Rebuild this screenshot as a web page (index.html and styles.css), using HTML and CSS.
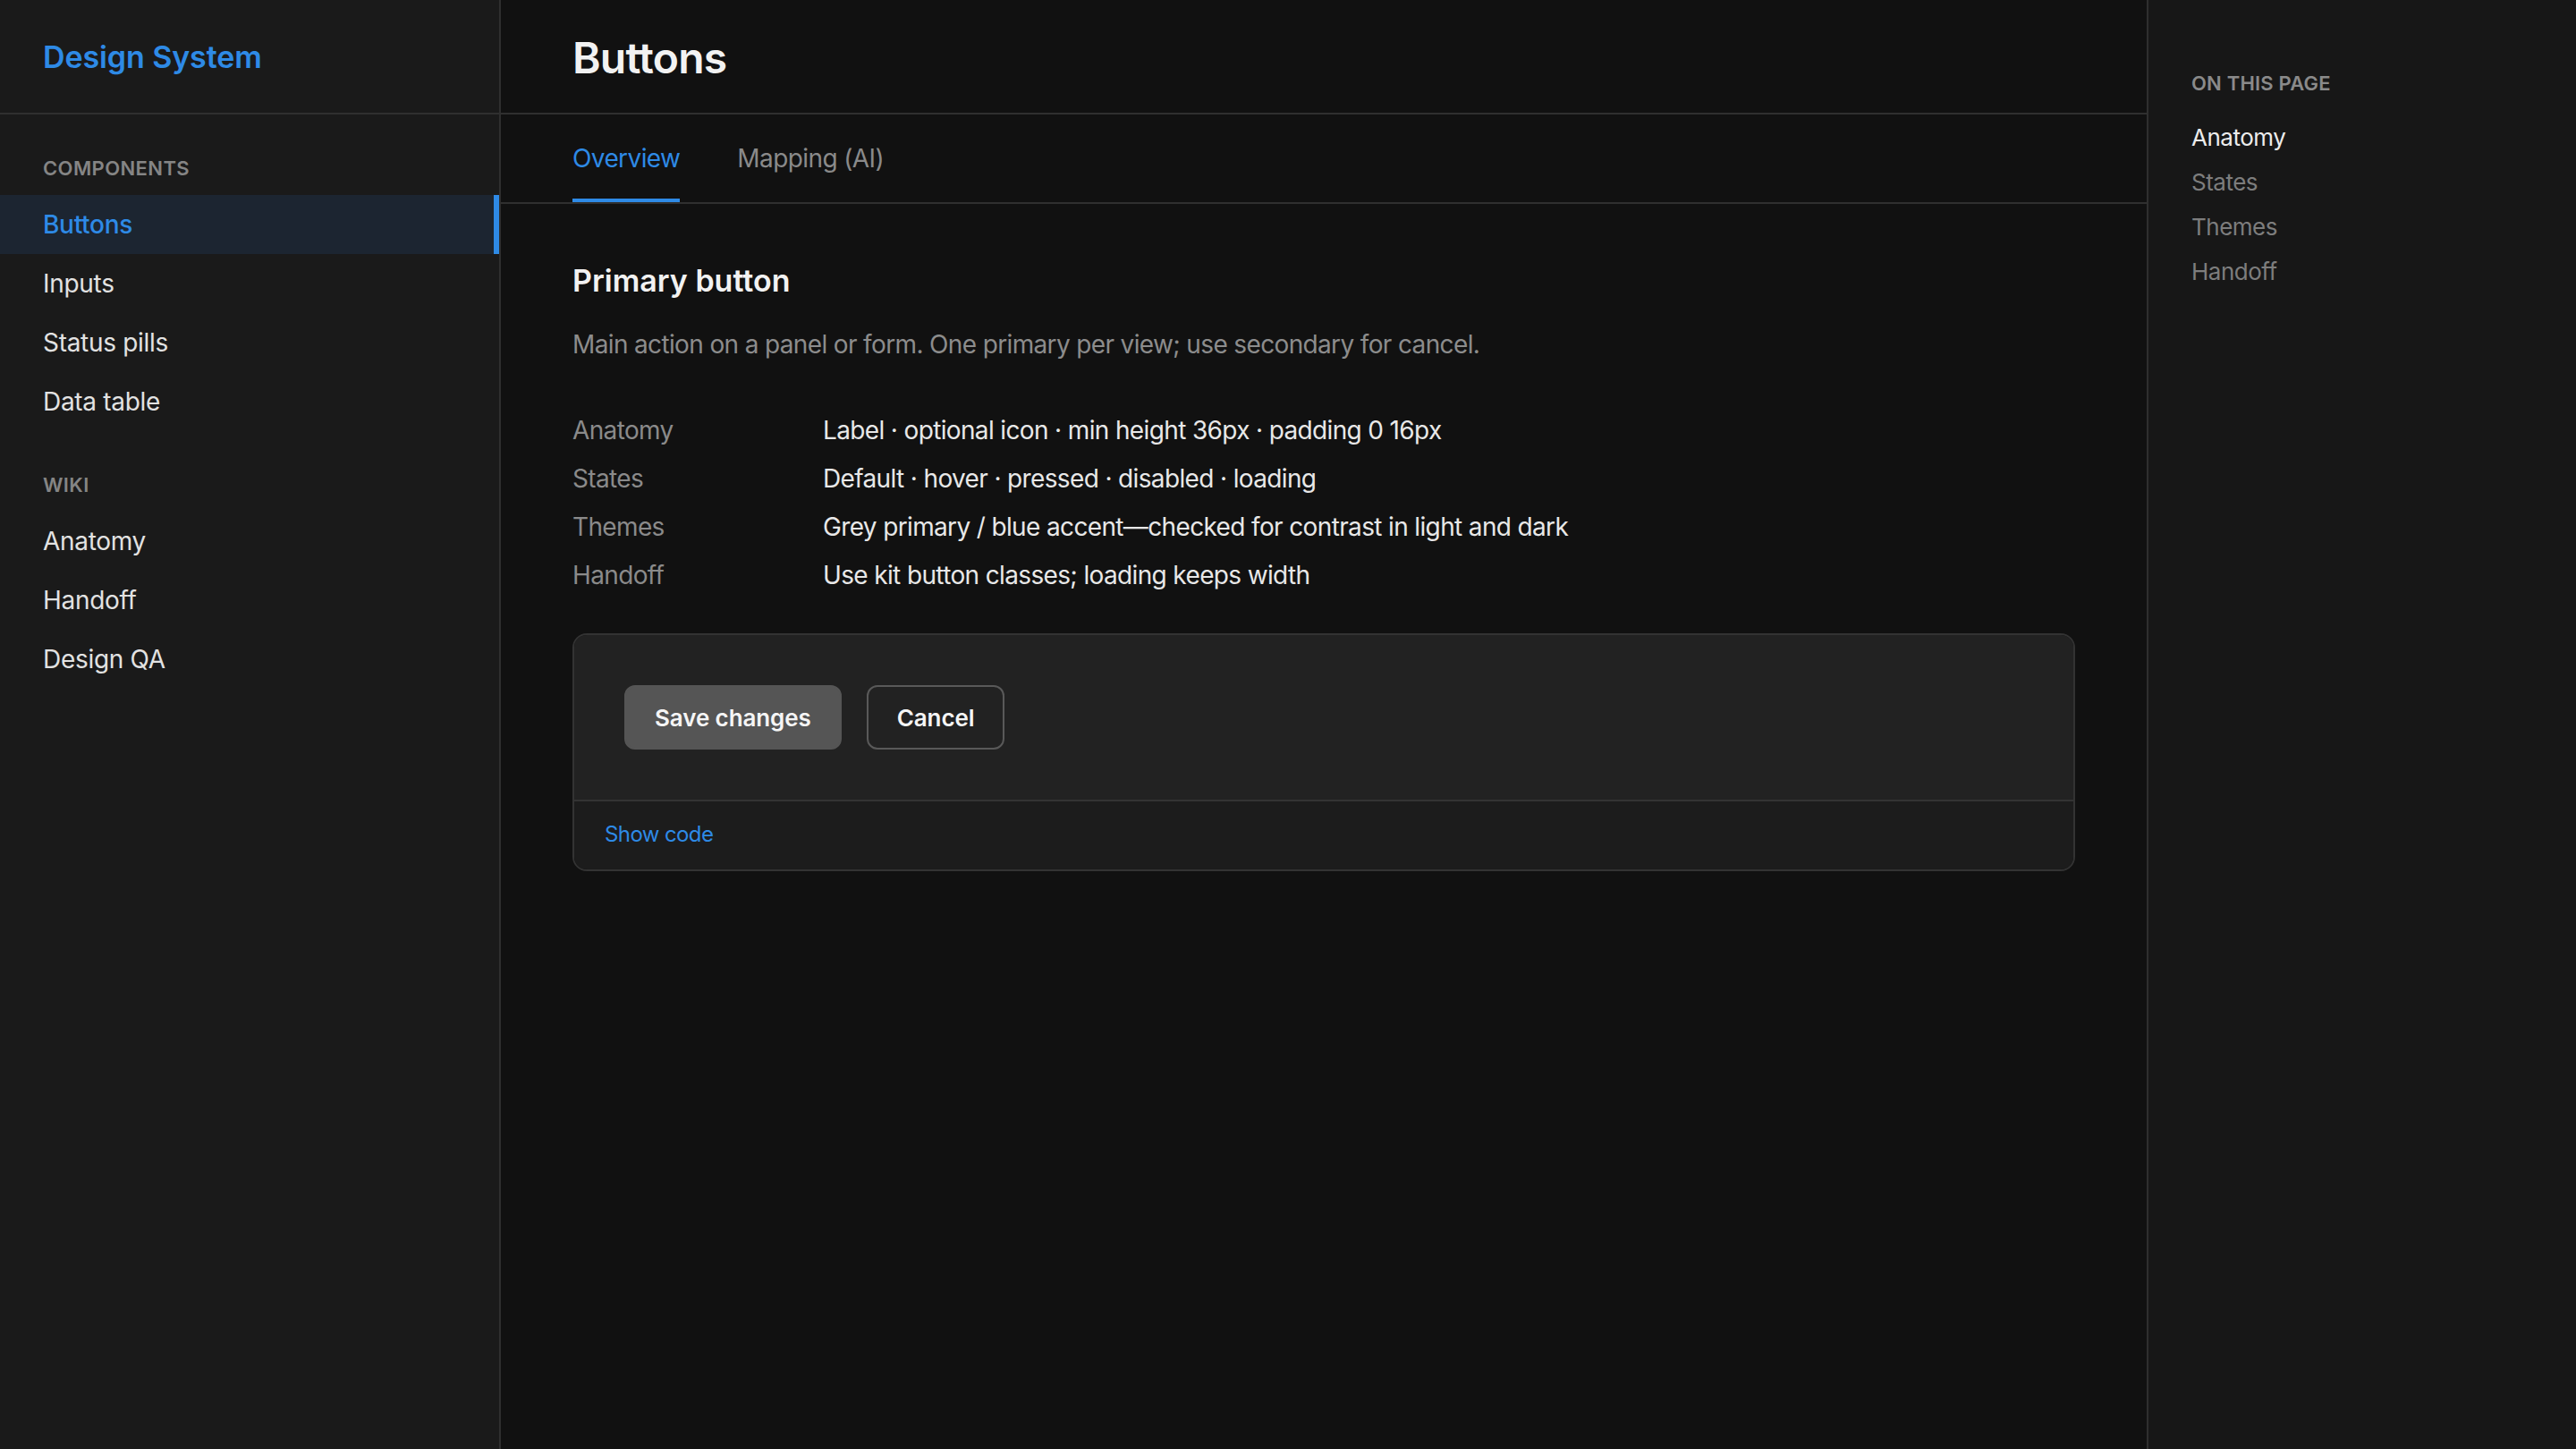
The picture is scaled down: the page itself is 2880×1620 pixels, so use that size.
FILE: index.html
```html
<!DOCTYPE html>
<html lang="en">
<head>
<meta charset="utf-8">
<title>Design System — Buttons</title>
<link rel="stylesheet" href="styles.css">
</head>
<body>
<div class="app">
  <aside class="sidebar">
    <div class="brand">Design System</div>
    <nav class="nav">
      <div class="nav-label">Components</div>
      <a class="nav-item active">Buttons</a>
      <a class="nav-item">Inputs</a>
      <a class="nav-item">Status pills</a>
      <a class="nav-item">Data table</a>
      <div class="nav-label nav-label-gap">Wiki</div>
      <a class="nav-item">Anatomy</a>
      <a class="nav-item">Handoff</a>
      <a class="nav-item">Design QA</a>
    </nav>
  </aside>

  <main class="main">
    <header class="page-header"><h1>Buttons</h1></header>
    <div class="tabs">
      <a class="tab active">Overview</a>
      <a class="tab">Mapping (AI)</a>
    </div>
    <section class="content">
      <h2>Primary button</h2>
      <p class="desc">Main action on a panel or form. One primary per view; use secondary for cancel.</p>
      <dl class="specs">
        <div class="spec-row"><dt>Anatomy</dt><dd>Label · optional icon · min height 36px · padding 0 16px</dd></div>
        <div class="spec-row"><dt>States</dt><dd>Default · hover · pressed · disabled · loading</dd></div>
        <div class="spec-row"><dt>Themes</dt><dd>Grey primary / blue accent—checked for contrast in light and dark</dd></div>
        <div class="spec-row"><dt>Handoff</dt><dd>Use kit button classes; loading keeps width</dd></div>
      </dl>
      <div class="demo">
        <div class="demo-preview">
          <button class="btn btn-primary">Save changes</button>
          <button class="btn btn-secondary">Cancel</button>
        </div>
        <div class="demo-footer"><a class="show-code">Show code</a></div>
      </div>
    </section>
  </main>

  <aside class="toc">
    <div class="toc-label">On this page</div>
    <a class="toc-item current">Anatomy</a>
    <a class="toc-item">States</a>
    <a class="toc-item">Themes</a>
    <a class="toc-item">Handoff</a>
  </aside>
</div>
</body>
</html>
```

FILE: styles.css
```css
html {
  zoom: 2;
}

* {
  box-sizing: border-box;
}

body {
  margin: 0;
  background: #111111;
  color: #e6e6e6;
  font-family: Inter, "Noto Sans", "Liberation Sans", sans-serif;
  font-size: 14px;
  -webkit-font-smoothing: antialiased;
}

.app {
  display: grid;
  grid-template-columns: 280px 1fr 240px;
  width: 1440px;
  height: 810px;
  overflow: hidden;
}

/* Sidebar */
.sidebar {
  background: #1a1a1a;
  border-right: 1px solid #2f2f2f;
}

.brand {
  height: 64px;
  display: flex;
  align-items: center;
  padding: 0 24px;
  border-bottom: 1px solid #2f2f2f;
  color: #2e8ae6;
  font-size: 17px;
  font-weight: 600;
  letter-spacing: -0.05px;
}

.nav {
  padding-top: 22px;
}

.nav-label {
  padding: 0 24px;
  margin-bottom: 7px;
  font-size: 11px;
  line-height: 16px;
  font-weight: 600;
  letter-spacing: 0.2px;
  text-transform: uppercase;
  color: #858585;
}

.nav-label-gap {
  margin-top: 22px;
}

.nav-item {
  display: block;
  padding: 6px 24px;
  line-height: 21px;
  font-size: 14px;
  letter-spacing: -0.15px;
  color: #e2e2e2;
  cursor: pointer;
}

.nav-item.active {
  background: #1c2531;
  color: #2e8ae6;
  font-weight: 500;
  box-shadow: inset -3px 0 0 #2e8ae6;
}

/* Main */
.main {
  background: #111111;
  min-width: 0;
}

.page-header {
  height: 64px;
  display: flex;
  align-items: center;
  padding: 0 40px;
  border-bottom: 1px solid #2f2f2f;
}

.page-header h1 {
  margin: 0;
  padding-top: 1px;
  font-size: 24px;
  font-weight: 600;
  color: #f2f2f2;
  letter-spacing: -0.4px;
}

.tabs {
  display: flex;
  gap: 32px;
  padding: 0 40px;
  border-bottom: 1px solid #2f2f2f;
}

.tab {
  height: 49px;
  display: flex;
  align-items: center;
  border-bottom: 2px solid transparent;
  padding-top: 2px;
  font-size: 14px;
  letter-spacing: -0.3px;
  color: #8a8a8a;
  cursor: pointer;
}

.tab.active {
  color: #2e8ae6;
  border-bottom-color: #2e8ae6;
}

.content {
  padding: 32px 40px 0;
}

.content h2 {
  margin: 0;
  font-size: 17px;
  line-height: 22px;
  font-weight: 600;
  color: #f2f2f2;
}

.desc {
  margin: 14.5px 0 0;
  font-size: 14px;
  line-height: 20px;
  letter-spacing: -0.32px;
  color: #8c8c8c;
}

.specs {
  margin: 24.5px 0 0;
}

.spec-row {
  display: grid;
  grid-template-columns: 140px 1fr;
  padding: 3px 0;
  line-height: 21px;
  font-size: 14px;
  letter-spacing: -0.32px;
}

.spec-row dt {
  color: #8a8a8a;
}

.spec-row dd {
  margin: 0;
  color: #e8e8e8;
}

.demo {
  margin-top: 19px;
  border: 1px solid #333333;
  border-radius: 8px;
  overflow: hidden;
}

.demo-preview {
  display: flex;
  gap: 14px;
  padding: 28px;
  background: #222222;
  border-bottom: 1px solid #333333;
}

.btn {
  height: 36px;
  padding: 0 16px;
  border-radius: 6px;
  font-family: inherit;
  font-size: 13px;
  font-weight: 600;
  letter-spacing: -0.05px;
  color: #f5f5f5;
  cursor: pointer;
}

.btn-primary {
  background: #555555;
  border: 1px solid #555555;
}

.btn-secondary {
  background: transparent;
  border: 1px solid #595959;
}

.demo-footer {
  background: #1c1c1c;
  padding: 8px 17px 10px;
  line-height: 19px;
}

.show-code {
  font-size: 12px;
  letter-spacing: -0.3px;
  color: #2e8ae6;
  cursor: pointer;
}

/* Right TOC */
.toc {
  background: #171717;
  border-left: 1px solid #2f2f2f;
  padding: 38.5px 24px 0;
}

.toc-label {
  font-size: 11px;
  line-height: 16px;
  font-weight: 600;
  letter-spacing: 0.1px;
  text-transform: uppercase;
  color: #8a8a8a;
  margin-bottom: 10px;
}

.toc-item {
  display: block;
  padding: 3px 0;
  line-height: 19px;
  font-size: 13px;
  letter-spacing: -0.25px;
  color: #7d7d7d;
  cursor: pointer;
}

.toc-item.current {
  color: #ececec;
}
```
